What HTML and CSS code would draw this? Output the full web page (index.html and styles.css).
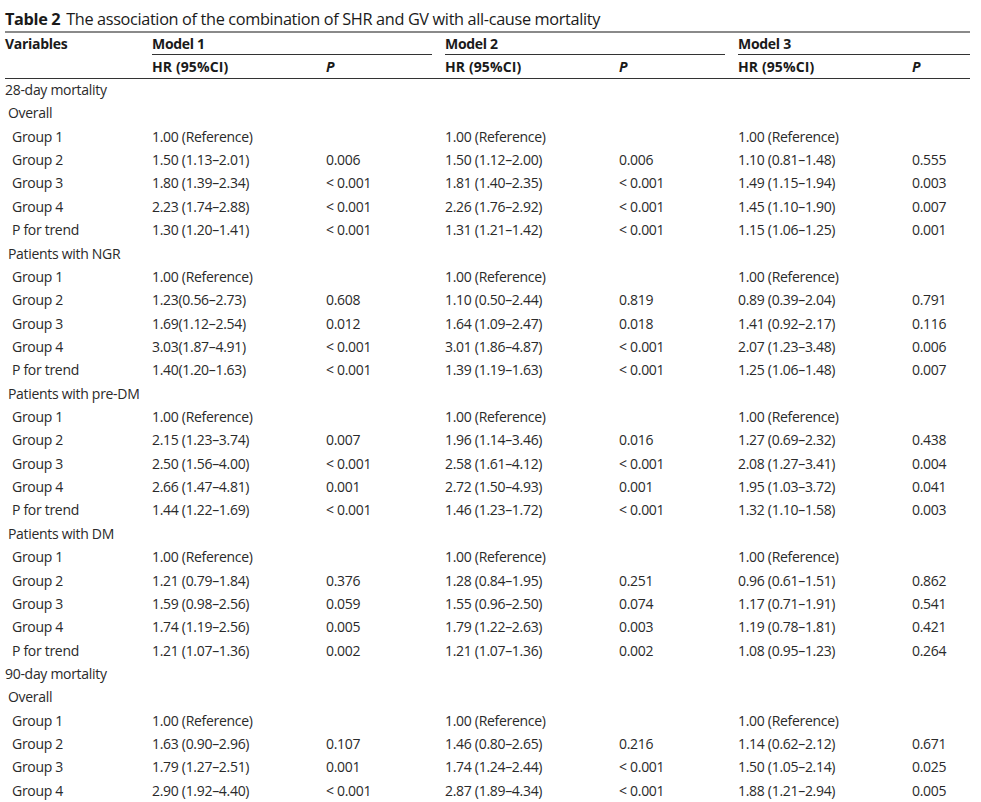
FILE: index.html
```html
<!DOCTYPE html>
<html lang="en">
<head>
<meta charset="utf-8">
<title>Table 2</title>
<link rel="stylesheet" href="styles.css">
</head>
<body>
<div class="page">
  <div class="caption"><b>Table 2</b> The association of the combination of SHR and GV with all-cause mortality</div>
  <table class="tbl">
    <colgroup>
      <col class="c-var"><col class="c-hr"><col class="c-p"><col class="c-hr"><col class="c-p"><col class="c-hr"><col class="c-plast">
    </colgroup>
    <thead>
      <tr class="h1">
        <th>Variables</th>
        <th colspan="2"><div class="model gap">Model 1</div></th>
        <th colspan="2"><div class="model gap">Model 2</div></th>
        <th colspan="2"><div class="model">Model 3</div></th>
      </tr>
      <tr class="h2">
        <th></th>
        <th>HR (95%CI)</th><th><i>P</i></th>
        <th>HR (95%CI)</th><th><i>P</i></th>
        <th>HR (95%CI)</th><th><i>P</i></th>
      </tr>
    </thead>
    <tbody>
      <tr><td class="l0">28-day mortality</td><td></td><td></td><td></td><td></td><td></td><td></td></tr>
      <tr><td class="l1">Overall</td><td></td><td></td><td></td><td></td><td></td><td></td></tr>
      <tr><td class="l2">Group 1</td><td>1.00 (Reference)</td><td></td><td>1.00 (Reference)</td><td></td><td>1.00 (Reference)</td><td></td></tr>
      <tr><td class="l2">Group 2</td><td>1.50 (1.13–2.01)</td><td>0.006</td><td>1.50 (1.12–2.00)</td><td>0.006</td><td>1.10 (0.81–1.48)</td><td>0.555</td></tr>
      <tr><td class="l2">Group 3</td><td>1.80 (1.39–2.34)</td><td>&lt; 0.001</td><td>1.81 (1.40–2.35)</td><td>&lt; 0.001</td><td>1.49 (1.15–1.94)</td><td>0.003</td></tr>
      <tr><td class="l2">Group 4</td><td>2.23 (1.74–2.88)</td><td>&lt; 0.001</td><td>2.26 (1.76–2.92)</td><td>&lt; 0.001</td><td>1.45 (1.10–1.90)</td><td>0.007</td></tr>
      <tr><td class="l2">P for trend</td><td>1.30 (1.20–1.41)</td><td>&lt; 0.001</td><td>1.31 (1.21–1.42)</td><td>&lt; 0.001</td><td>1.15 (1.06–1.25)</td><td>0.001</td></tr>
      <tr><td class="l1">Patients with NGR</td><td></td><td></td><td></td><td></td><td></td><td></td></tr>
      <tr><td class="l2">Group 1</td><td>1.00 (Reference)</td><td></td><td>1.00 (Reference)</td><td></td><td>1.00 (Reference)</td><td></td></tr>
      <tr><td class="l2">Group 2</td><td>1.23(0.56–2.73)</td><td>0.608</td><td>1.10 (0.50–2.44)</td><td>0.819</td><td>0.89 (0.39–2.04)</td><td>0.791</td></tr>
      <tr><td class="l2">Group 3</td><td>1.69(1.12–2.54)</td><td>0.012</td><td>1.64 (1.09–2.47)</td><td>0.018</td><td>1.41 (0.92–2.17)</td><td>0.116</td></tr>
      <tr><td class="l2">Group 4</td><td>3.03(1.87–4.91)</td><td>&lt; 0.001</td><td>3.01 (1.86–4.87)</td><td>&lt; 0.001</td><td>2.07 (1.23–3.48)</td><td>0.006</td></tr>
      <tr><td class="l2">P for trend</td><td>1.40(1.20–1.63)</td><td>&lt; 0.001</td><td>1.39 (1.19–1.63)</td><td>&lt; 0.001</td><td>1.25 (1.06–1.48)</td><td>0.007</td></tr>
      <tr><td class="l1">Patients with pre-DM</td><td></td><td></td><td></td><td></td><td></td><td></td></tr>
      <tr><td class="l2">Group 1</td><td>1.00 (Reference)</td><td></td><td>1.00 (Reference)</td><td></td><td>1.00 (Reference)</td><td></td></tr>
      <tr><td class="l2">Group 2</td><td>2.15 (1.23–3.74)</td><td>0.007</td><td>1.96 (1.14–3.46)</td><td>0.016</td><td>1.27 (0.69–2.32)</td><td>0.438</td></tr>
      <tr><td class="l2">Group 3</td><td>2.50 (1.56–4.00)</td><td>&lt; 0.001</td><td>2.58 (1.61–4.12)</td><td>&lt; 0.001</td><td>2.08 (1.27–3.41)</td><td>0.004</td></tr>
      <tr><td class="l2">Group 4</td><td>2.66 (1.47–4.81)</td><td>0.001</td><td>2.72 (1.50–4.93)</td><td>0.001</td><td>1.95 (1.03–3.72)</td><td>0.041</td></tr>
      <tr><td class="l2">P for trend</td><td>1.44 (1.22–1.69)</td><td>&lt; 0.001</td><td>1.46 (1.23–1.72)</td><td>&lt; 0.001</td><td>1.32 (1.10–1.58)</td><td>0.003</td></tr>
      <tr><td class="l1">Patients with DM</td><td></td><td></td><td></td><td></td><td></td><td></td></tr>
      <tr><td class="l2">Group 1</td><td>1.00 (Reference)</td><td></td><td>1.00 (Reference)</td><td></td><td>1.00 (Reference)</td><td></td></tr>
      <tr><td class="l2">Group 2</td><td>1.21 (0.79–1.84)</td><td>0.376</td><td>1.28 (0.84–1.95)</td><td>0.251</td><td>0.96 (0.61–1.51)</td><td>0.862</td></tr>
      <tr><td class="l2">Group 3</td><td>1.59 (0.98–2.56)</td><td>0.059</td><td>1.55 (0.96–2.50)</td><td>0.074</td><td>1.17 (0.71–1.91)</td><td>0.541</td></tr>
      <tr><td class="l2">Group 4</td><td>1.74 (1.19–2.56)</td><td>0.005</td><td>1.79 (1.22–2.63)</td><td>0.003</td><td>1.19 (0.78–1.81)</td><td>0.421</td></tr>
      <tr><td class="l2">P for trend</td><td>1.21 (1.07–1.36)</td><td>0.002</td><td>1.21 (1.07–1.36)</td><td>0.002</td><td>1.08 (0.95–1.23)</td><td>0.264</td></tr>
      <tr><td class="l0">90-day mortality</td><td></td><td></td><td></td><td></td><td></td><td></td></tr>
      <tr><td class="l1">Overall</td><td></td><td></td><td></td><td></td><td></td><td></td></tr>
      <tr><td class="l2">Group 1</td><td>1.00 (Reference)</td><td></td><td>1.00 (Reference)</td><td></td><td>1.00 (Reference)</td><td></td></tr>
      <tr><td class="l2">Group 2</td><td>1.63 (0.90–2.96)</td><td>0.107</td><td>1.46 (0.80–2.65)</td><td>0.216</td><td>1.14 (0.62–2.12)</td><td>0.671</td></tr>
      <tr><td class="l2">Group 3</td><td>1.79 (1.27–2.51)</td><td>0.001</td><td>1.74 (1.24–2.44)</td><td>&lt; 0.001</td><td>1.50 (1.05–2.14)</td><td>0.025</td></tr>
      <tr><td class="l2">Group 4</td><td>2.90 (1.92–4.40)</td><td>&lt; 0.001</td><td>2.87 (1.89–4.34)</td><td>&lt; 0.001</td><td>1.88 (1.21–2.94)</td><td>0.005</td></tr>
    </tbody>
  </table>
</div>
</body>
</html>
```

FILE: styles.css
```css
html, body {
  margin: 0;
  padding: 0;
  background: #ffffff;
}
.page {
  padding: 8px 11px 0 5px;
  font-family: "Open Sans", "Noto Sans", sans-serif;
  color: #1e1e1e;
}
.caption {
  font-size: 16.3px;
  line-height: 22px;
  letter-spacing: -0.35px;
  color: #1a1a1a;
}
.caption b {
  font-weight: 700;
  margin-right: 2px;
}
.tbl {
  width: 965px;
  border-collapse: collapse;
  table-layout: fixed;
  border-top: 2px solid #8a8a8a;
  font-size: 14px;
  letter-spacing: -0.3px;
  margin-top: 1px;
}
.c-var { width: 147px; }
.c-hr { width: 174px; }
.c-p { width: 119px; }
.c-plast { width: 58px; }
.tbl th {
  text-align: left;
  font-weight: 700;
  padding: 0;
  color: #1a1a1a;
}
.h1 th {
  height: 21px;
  vertical-align: bottom;
}
.model {
  border-bottom: 1px solid #333;
  height: 21px;
  line-height: 22px;
}
.model.gap {
  margin-right: 13px;
}
.h1 th:first-child {
  line-height: 22px;
  vertical-align: top;
}
.h2 th {
  height: 22px;
  line-height: 23px;
  letter-spacing: 0.1px;
  border-bottom: 1px solid #333;
  vertical-align: middle;
}
.h2 th i {
  font-style: italic;
}
.tbl td {
  padding: 0;
  height: 23.37px;
  line-height: 22px;
  vertical-align: top;
  white-space: nowrap;
  color: #2a2a2a;
  font-weight: 400;
}
.tbl td.l0 { padding-left: 0; }
.tbl td.l1 { padding-left: 3px; }
.tbl td.l2 { padding-left: 7px; }
```
